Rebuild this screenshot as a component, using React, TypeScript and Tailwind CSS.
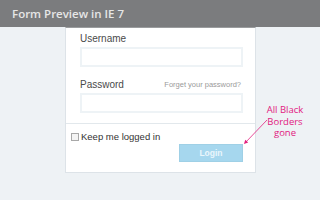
import React from 'react';

const FormField: React.FC<{ label: string; aside?: string }> = ({ label, aside }) => (
  <div className="flex flex-col">
    <div className="flex h-[12px] items-center justify-between pr-[2px] leading-[12px]">
      <span className="text-[10px] text-[#4a4a4a]">{label}</span>
      {aside && <span className="text-[7.5px] text-[#9a9a9a]">{aside}</span>}
    </div>
    <div className="mt-[2px] h-[20px] border-2 border-[#eef3f6] bg-white" />
  </div>
);

export default function App() {
  return (
    <div
      className="relative h-[200px] w-[320px] overflow-hidden bg-[#eef2f5]"
      style={{ fontFamily: '"Liberation Sans", Arial, sans-serif' }}
    >
      <div className="flex h-[27px] items-center bg-[#7b7c7e] pl-[12px]">
        <span
          className="text-[11.5px] font-semibold text-[#e6e6e6]"
          style={{ fontFamily: '"Open Sans", sans-serif' }}
        >
          Form Preview in IE 7
        </span>
      </div>

      <div className="ml-[65px] w-[191px] border border-t-[#9a9c9e] border-[#dde3e8] bg-white">
        <div className="flex flex-col gap-[12px] pl-[14px] pr-[12px] pt-[5px]">
          <FormField label="Username" />
          <FormField label="Password" aside="Forget your password?" />
        </div>
        <div className="mt-[10px] h-px bg-[#e2e8ec]" />
        <div className="flex flex-col pb-[10px] pl-[5px] pr-[12px] pt-[7px]">
          <label className="flex h-[12px] items-center gap-[2px]">
            <span className="block h-[8px] w-[8px] border border-[#a8a8a8] bg-[#f4f4f4]" />
            <span className="text-[9.5px] text-[#333]">Keep me logged in</span>
          </label>
          <div className="mt-[1px] flex justify-end">
            <button className="h-[18px] w-[64px] border border-[#9fd0e6] bg-[#a6d7ee] text-[8.5px] font-bold text-[#eaf6fc]">
              Login
            </button>
          </div>
        </div>
      </div>

      <div
        className="absolute left-[262px] top-[104px] w-[46px] text-center text-[9.5px] font-medium leading-[11.5px] text-[#e2207f]"
        style={{ fontFamily: '"Open Sans", sans-serif' }}
      >
        All Black
        <br />
        Borders
        <br />
        gone
      </div>
      <svg className="absolute left-0 top-0" width="320" height="200">
        <line x1="267" y1="120" x2="245" y2="143" stroke="#e2207f" strokeWidth="0.8" />
        <path d="M244 144 L245.2 139.8 L248.2 142.6 Z" fill="#e2207f" />
      </svg>
    </div>
  );
}
